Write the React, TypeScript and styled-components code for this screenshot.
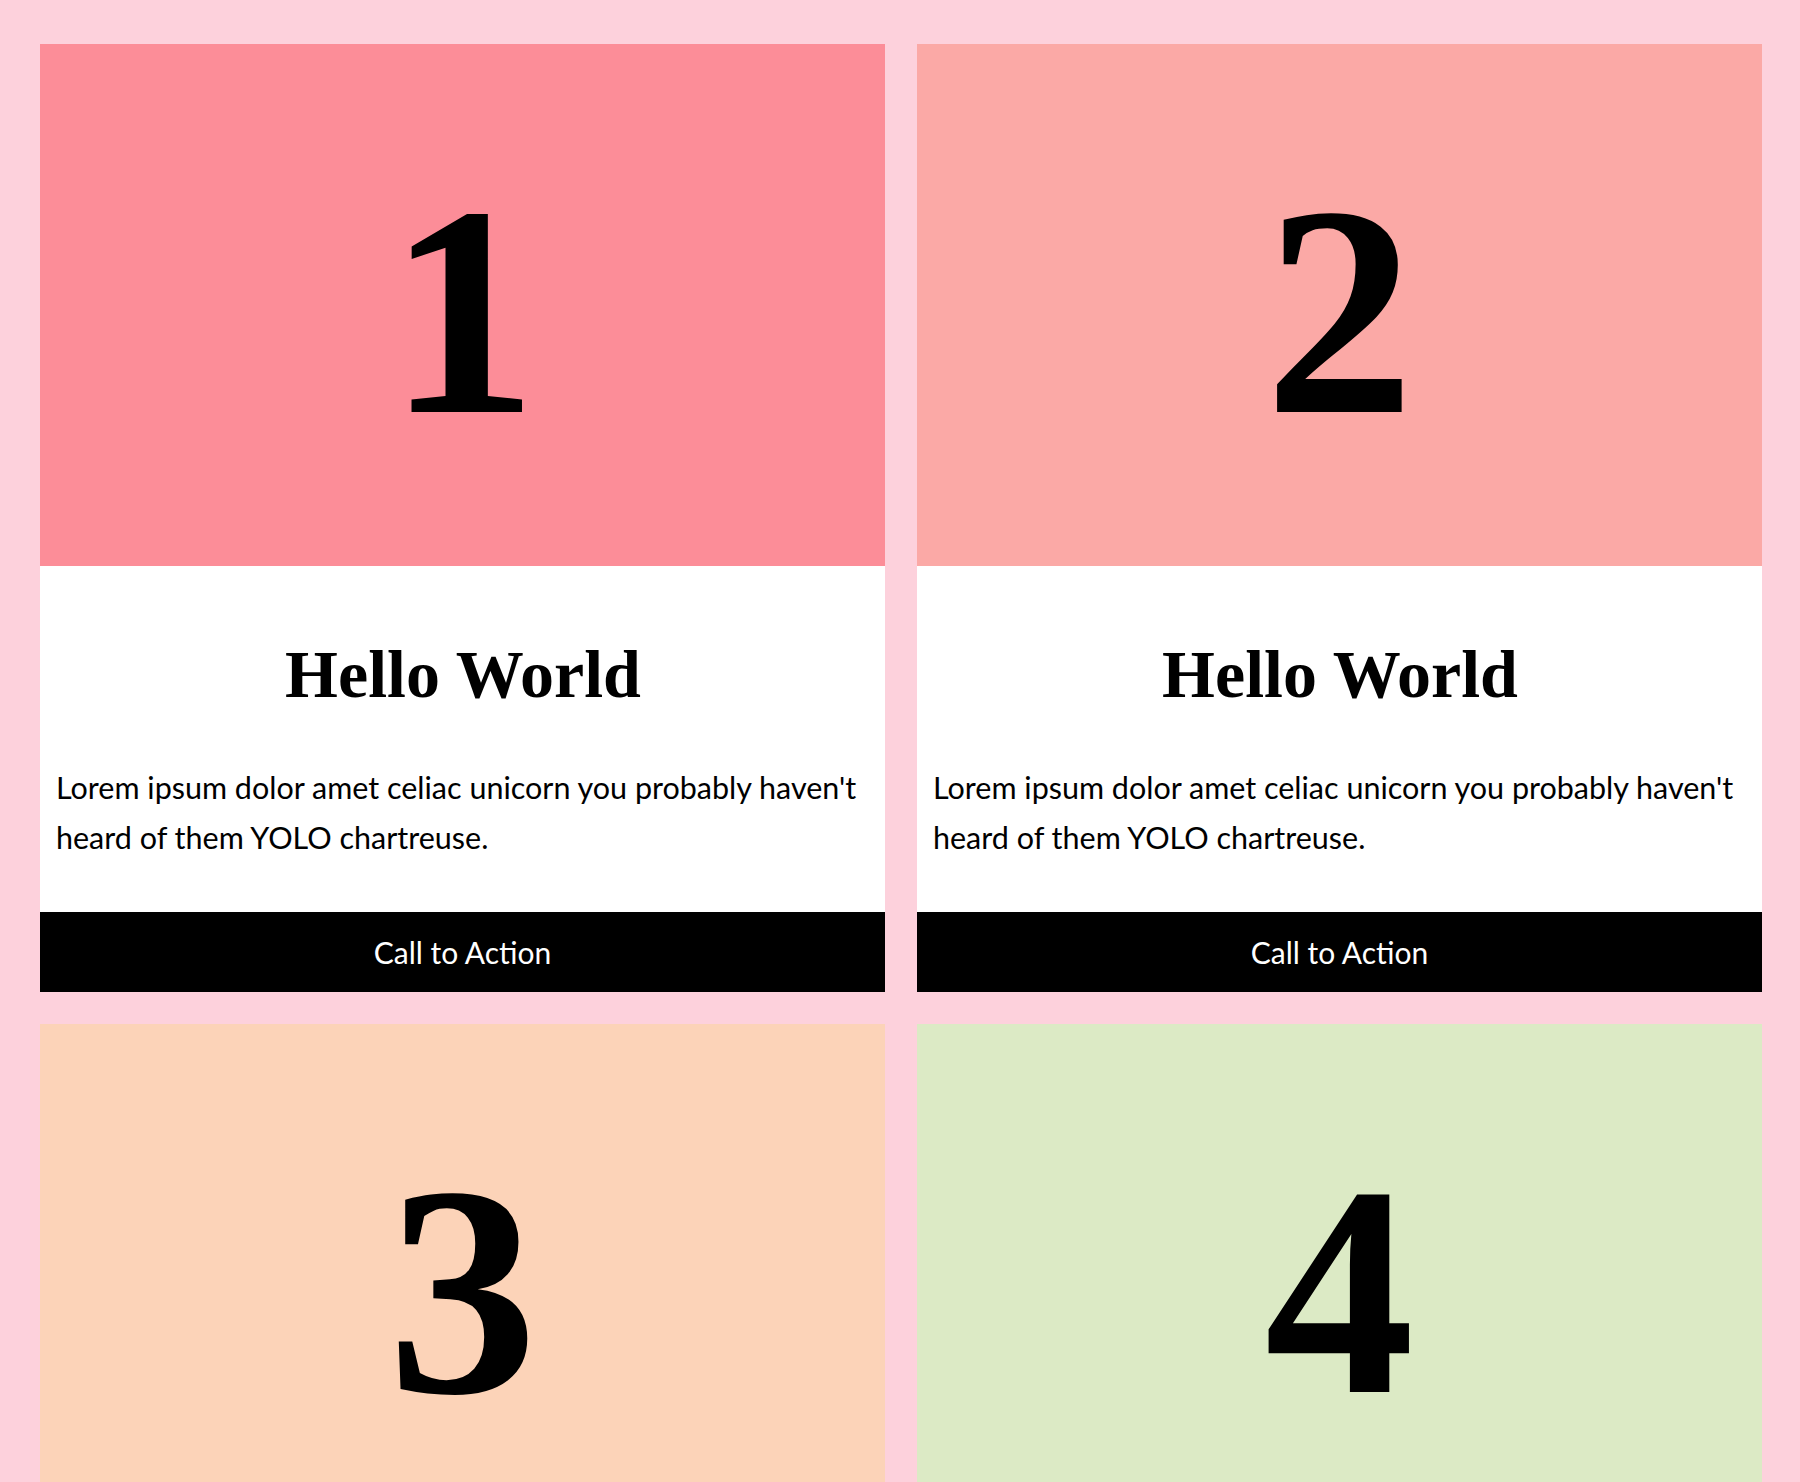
import React from 'react'
import styled, { createGlobalStyle } from 'styled-components'

const GlobalStyle = createGlobalStyle`
    html, body {
        margin: 0;
        padding: 0;
        background: #fdd1dc;
    }
`

const Grid = styled.div`
    display: grid;
    grid-template-columns: 1fr 1fr;
    gap: 32px;
    padding: 44px 38px 0 40px;
`

const Card = styled.div`
    display: flex;
    flex-direction: column;
    background: #ffffff;
`

const Picture = styled.div<{ $bg: string }>`
    height: 522px;
    box-sizing: border-box;
    padding-top: 12px;
    display: flex;
    align-items: center;
    justify-content: center;
    background: ${p => p.$bg};
    font-family: "Liberation Serif", "Times New Roman", serif;
    font-weight: 700;
    font-size: 300px;
    line-height: 300px;
    color: #000;
`

const Body = styled.div`
    padding: 66px 15px 50px 16px;
`

const Title = styled.h2`
    margin: 0 0 46px 0;
    text-align: center;
    font-family: "Liberation Serif", "Times New Roman", serif;
    font-weight: 700;
    font-size: 68px;
    line-height: 84px;
    color: #000;
`

const Text = styled.p`
    margin: 0;
    font-family: Lato, "Liberation Sans", sans-serif;
    font-size: 30.5px;
    line-height: 50px;
    color: #000;
`

const Button = styled.button`
    height: 80px;
    border: none;
    background: #000;
    color: #fff;
    font-family: Lato, "Liberation Sans", sans-serif;
    font-size: 30px;
    cursor: pointer;
`

const cards = [
    { n: '1', bg: '#fc8d98' },
    { n: '2', bg: '#fba9a6' },
    { n: '3', bg: '#fcd3b8' },
    { n: '4', bg: '#dceac5' },
]

export default function App() {
    return (
        <>
            <GlobalStyle />
            <Grid>
                {cards.map(c => (
                    <Card key={c.n}>
                        <Picture $bg={c.bg}>{c.n}</Picture>
                        <Body>
                            <Title>Hello World</Title>
                            <Text>
                                Lorem ipsum dolor amet celiac unicorn you probably haven't heard of them YOLO chartreuse.
                            </Text>
                        </Body>
                        <Button>Call to Action</Button>
                    </Card>
                ))}
            </Grid>
        </>
    )
}
